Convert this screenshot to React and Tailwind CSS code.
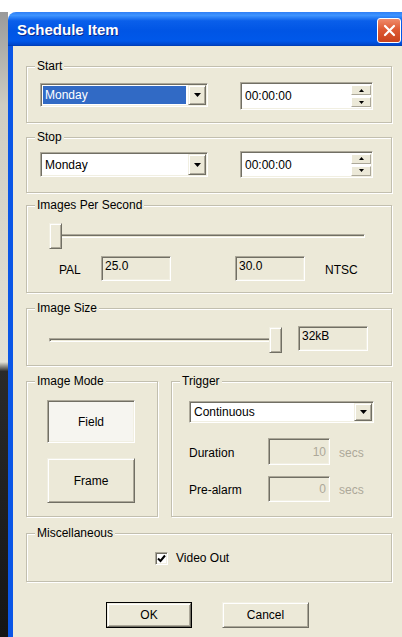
import React from "react";

const raised =
  "border border-t-[#F1EFE2] border-l-[#F1EFE2] border-b-[#716F64] border-r-[#716F64] shadow-[inset_1px_1px_0_#fff,inset_-1px_-1px_0_#ACA899] bg-[#ECE9D8]";
const sunken =
  "border border-t-[#ACA899] border-l-[#ACA899] border-b-white border-r-white shadow-[inset_1px_1px_0_#716F64,inset_-1px_-1px_0_#F1EFE2]";

function DownArrow() {
  return (
    <svg width="7" height="4" viewBox="0 0 7 4">
      <polygon points="0,0 7,0 3.5,4" fill="#000" />
    </svg>
  );
}

function Group({ label, className = "", children }) {
  return (
    <div
      className={`relative border border-[#C2BFAF] shadow-[inset_1px_1px_0_#fff,1px_1px_0_#fff] ${className}`}
    >
      <span className="absolute left-[8px] -top-[8px] bg-[#ECE9D8] px-[2px] leading-[14px]">
        {label}
      </span>
      {children}
    </div>
  );
}

function Combo({ value, selected, className = "" }) {
  return (
    <div className={`flex bg-white p-[1px] ${sunken} ${className}`}>
      <div className="flex-1 flex p-[1px] pr-[2px]">
        <div
          className={`flex-1 flex items-center pl-[2px] ${
            selected ? "bg-[#316AC5] text-white" : ""
          }`}
        >
          {value}
        </div>
      </div>
      <div className={`w-[18px] flex items-center justify-center ${raised}`}>
        <DownArrow />
      </div>
    </div>
  );
}

function SpinButton({ up }) {
  return (
    <div className="h-[10px] w-[20px] flex items-center justify-center bg-[#ECE9D8] border border-t-white border-l-white border-b-[#ACA899] border-r-[#ACA899]">
      <svg width="5" height="3" viewBox="0 0 5 3">
        <polygon
          points={up ? "0,3 5,3 2.5,0" : "0,0 5,0 2.5,3"}
          fill="#000"
        />
      </svg>
    </div>
  );
}

function TimeField({ className = "" }) {
  return (
    <div className={`flex items-center bg-white ${sunken} ${className}`}>
      <span className="flex-1 pl-[4px]">00:00:00</span>
      <div className="flex flex-col gap-[2px] mr-[1px]">
        <SpinButton up />
        <SpinButton />
      </div>
    </div>
  );
}

function Slider({ className = "", thumbClass = "" }) {
  return (
    <div className={`relative h-[26px] ${className}`}>
      <div className="absolute left-0 right-0 top-[11px] h-[4px] border border-t-[#ACA899] border-l-[#ACA899] border-b-white border-r-white shadow-[inset_1px_1px_0_#716F64]" />
      <div className={`absolute top-0 h-[26px] w-[13px] ${raised} ${thumbClass}`} />
    </div>
  );
}

function ReadBox({ value, className = "" }) {
  return (
    <div className={`bg-[#ECE9D8] pl-[3px] pt-[1px] leading-[16px] ${sunken} ${className}`}>
      {value}
    </div>
  );
}

function SecsBox({ value, className = "" }) {
  return (
    <div
      className={`bg-[#ECE9D8] flex items-center justify-end pr-[3px] text-[#ACA899] ${sunken} ${className}`}
    >
      {value}
    </div>
  );
}

function Button({ children, className = "", isDefault }) {
  const inner = (
    <div className={`w-full h-full flex items-center justify-center ${raised}`}>
      {children}
    </div>
  );
  return isDefault ? (
    <div className={`border border-black ${className}`}>{inner}</div>
  ) : (
    <div className={className}>{inner}</div>
  );
}

export default function App() {
  return (
    <div className="w-[402px] h-[637px] overflow-hidden bg-white flex flex-col font-['Liberation_Sans',Arial,sans-serif] text-[12px] text-black select-none">
      <div className="h-[12px] shrink-0" />
      <div className="flex flex-1">
        {/* desktop showing behind the dialog */}
        <div className="w-[8px] shrink-0 bg-[linear-gradient(180deg,#9a9a9a_0%,#cfcdc2_15%,#e3e1d6_56%,#2a2a2a_57.5%,#151515_100%)]" />
        <div className="w-[394px] shrink-0 flex flex-col">
          {/* caption bar */}
          <div className="h-[34px] shrink-0 rounded-tl-[8px] flex justify-between bg-[linear-gradient(180deg,#2f7ff5_0%,#3e94ff_10%,#0a5fea_26%,#0055e5_55%,#0058ea_85%,#0047cc_96%,#003aae_100%)]">
            <span className="pl-[9px] pt-[9px] text-white font-bold text-[15px] leading-[18px] [text-shadow:1px_1px_0_#0b2a8a]">
              Schedule Item
            </span>
            <div className="mt-[6px] mr-[1px] w-[24px] h-[25px] rounded-[3px] border border-white flex items-center justify-center bg-[linear-gradient(180deg,#ef8b6b_0%,#de5a34_45%,#c9431d_100%)]">
              <svg width="13" height="13" viewBox="0 0 13 13">
                <path
                  d="M2 2 L11 11 M11 2 L2 11"
                  stroke="#fff"
                  strokeWidth="2.2"
                  strokeLinecap="round"
                />
              </svg>
            </div>
          </div>

          {/* dialog body */}
          <div className="flex-1 flex flex-col bg-[#ECE9D8] border-l-[5px] border-[#0A56E6] pl-[13px] pt-[20px]">
            <Group label="Start" className="w-[366px] h-[57px] flex items-start pt-[15px] pl-[13px]">
              <Combo value="Monday" selected className="w-[168px] h-[24px] mt-[1px]" />
              <TimeField className="ml-[32px] w-[133px] h-[28px]" />
            </Group>

            <Group label="Stop" className="mt-[14px] w-[366px] h-[56px] flex items-start pt-[13px] pl-[13px]">
              <Combo value="Monday" className="w-[168px] h-[25px] mt-[1px]" />
              <TimeField className="ml-[32px] w-[133px] h-[27px]" />
            </Group>

            <Group label="Images Per Second" className="mt-[12px] w-[366px] h-[88px] flex flex-col pt-[17px] pl-[22px]">
              <Slider className="w-[316px]" thumbClass="left-0" />
              <div className="mt-[7px] ml-[10px] flex items-center h-[25px]">
                <span className="w-[42px] pt-[3px]">PAL</span>
                <ReadBox value="25.0" className="w-[70px] h-[25px]" />
                <ReadBox value="30.0" className="ml-[64px] w-[70px] h-[25px]" />
                <span className="ml-[20px] pt-[3px]">NTSC</span>
              </div>
            </Group>

            <Group label="Image Size" className="mt-[15px] w-[366px] h-[58px] flex items-start pt-[17px] pl-[22px]">
              <Slider className="w-[233px] mt-[1px]" thumbClass="left-[220px]" />
              <ReadBox value="32kB" className="ml-[16px] w-[70px] h-[25px]" />
            </Group>

            <div className="mt-[15px] flex h-[136px]">
              <Group label="Image Mode" className="w-[132px] h-[136px] flex flex-col pt-[18px] pl-[20px]">
                <div className={`w-[88px] h-[43px] flex items-center justify-center bg-[#F6F5F0] ${sunken}`}>
                  Field
                </div>
                <Button className="mt-[15px] w-[88px] h-[45px]">Frame</Button>
              </Group>

              <Group label="Trigger" className="ml-[13px] w-[221px] h-[136px] flex flex-col pt-[19px] pl-[17px]">
                <Combo value="Continuous" className="w-[185px] h-[22px]" />
                <div className="mt-[15px] flex items-center">
                  <span className="w-[79px] pt-[2px]">Duration</span>
                  <SecsBox value="10" className="w-[62px] h-[27px]" />
                  <span className="ml-[9px] pt-[2px] text-[#ACA899]">secs</span>
                </div>
                <div className="mt-[11px] flex items-center">
                  <span className="w-[79px] pt-[2px]">Pre-alarm</span>
                  <SecsBox value="0" className="w-[62px] h-[26px]" />
                  <span className="ml-[9px] pt-[2px] text-[#ACA899]">secs</span>
                </div>
              </Group>
            </div>

            <Group label="Miscellaneous" className="mt-[16px] w-[366px] h-[49px] flex items-start pt-[18px] pl-[128px]">
              <div className={`w-[13px] h-[13px] bg-white flex items-center justify-center ${sunken}`}>
                <svg width="9" height="9" viewBox="0 0 9 9">
                  <path d="M1 4.5 L3.5 7 L8 1.5" stroke="#000" strokeWidth="2" fill="none" />
                </svg>
              </div>
              <span className="ml-[8px] leading-[13px]">Video Out</span>
            </Group>

            <div className="mt-[20px] ml-[80px] flex">
              <Button isDefault className="w-[86px] h-[26px]">OK</Button>
              <Button className="ml-[30px] w-[87px] h-[26px]">Cancel</Button>
            </div>
          </div>
        </div>
      </div>
    </div>
  );
}
